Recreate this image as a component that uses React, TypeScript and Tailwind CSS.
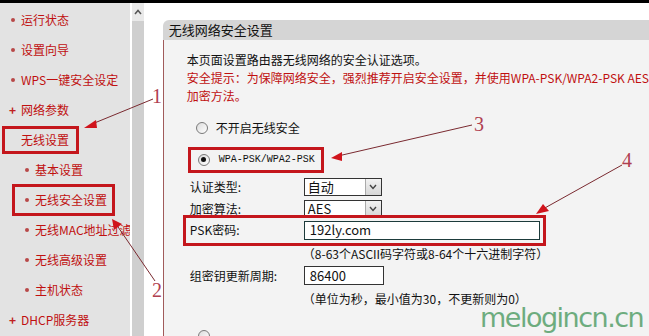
import React from 'react';

const cjk = { fontFamily: '"Noto Sans CJK SC", "Liberation Sans", sans-serif' };

type NavItem = { label: string; kind: 'dot' | 'plus' | 'none'; sub?: boolean; boxed?: boolean };

const navItems: NavItem[] = [
  { label: '运行状态', kind: 'dot' },
  { label: '设置向导', kind: 'dot' },
  { label: 'WPS一键安全设定', kind: 'dot' },
  { label: '网络参数', kind: 'plus' },
  { label: '无线设置', kind: 'none', boxed: true },
  { label: '基本设置', kind: 'dot', sub: true },
  { label: '无线安全设置', kind: 'dot', sub: true, boxed: true },
  { label: '无线MAC地址过滤', kind: 'dot', sub: true },
  { label: '无线高级设置', kind: 'dot', sub: true },
  { label: '主机状态', kind: 'dot', sub: true },
  { label: 'DHCP服务器', kind: 'plus' },
];

function NavRow({ item }: { item: NavItem }) {
  const marker =
    item.kind === 'dot' ? (
      <span className="flex w-[9px] justify-center">
        <span className="h-[4px] w-[4px] rounded-full bg-[#b84848]" />
      </span>
    ) : item.kind === 'plus' ? (
      <span className="w-[9px] text-center text-[12px] font-bold leading-none text-[#c02020]">+</span>
    ) : (
      <span className="w-[9px]" />
    );
  return (
    <div className={`flex h-[30px] items-center whitespace-nowrap ${item.sub ? 'pl-[22px]' : 'pl-[8px]'}`}>
      <div
        className={`flex items-center ${
          item.boxed
            ? item.sub
              ? '-ml-[10px] h-[32px] w-[103px] border-[3px] border-[#c4161c] pl-[7px]'
              : '-ml-[6px] h-[28px] w-[77px] border-[3px] border-[#c4161c] pl-[3px]'
            : ''
        }`}
      >
        {marker}
        <span className="ml-[4px] text-[12px] text-[#c01010]">{item.label}</span>
      </div>
    </div>
  );
}

function Radio({ checked }: { checked?: boolean }) {
  return (
    <span className="flex h-[12px] w-[12px] items-center justify-center rounded-full border border-[#7a7a7a] bg-gradient-to-br from-[#dcdcdc] to-white">
      {checked && <span className="h-[5px] w-[5px] rounded-full bg-[#111]" />}
    </span>
  );
}

function Select({ value }: { value: string }) {
  return (
    <div className="flex h-[18px] w-[78px] items-center border border-[#333] bg-white">
      <span className="flex-1 pl-[3px] text-[13px] leading-none text-[#111]">{value}</span>
      <span className="flex h-full w-[16px] items-center justify-center border-l border-[#aaa] bg-gradient-to-b from-[#f2f2f2] to-[#d6d6d6]">
        <svg width="8" height="6" viewBox="0 0 8 6">
          <path d="M1 1 L4 4.5 L7 1" fill="none" stroke="#444" strokeWidth="1.4" />
        </svg>
      </span>
    </div>
  );
}

export default function App() {
  return (
    <div className="relative h-[336px] w-[649px] overflow-hidden bg-white" style={cjk}>
      <div className="h-[3px] bg-black" />
      <div className="flex h-[333px]">
        {/* sidebar */}
        <div className="w-[130px] bg-[#e3e3e3] pt-[2px]">
          {navItems.map((it) => (
            <NavRow key={it.label} item={it} />
          ))}
        </div>
        <div className="w-[2px] bg-white" />
        {/* scrollbar */}
        <div className="w-[15px] bg-[#cfcfcf]">
          <div className="flex h-[18px] items-center justify-center bg-[#e9e9e9]">
            <svg width="8" height="6" viewBox="0 0 8 6">
              <path d="M1 5 L4 1.5 L7 5" fill="none" stroke="#555" strokeWidth="1.5" />
            </svg>
          </div>
        </div>
        <div className="w-[23px] bg-white" />
        {/* main panel */}
        <div className="flex flex-1 flex-col pt-[17px]">
          <div className="flex h-[23px] items-center rounded-tl-[6px] bg-[#d5d5d5] pl-[6px] text-[13px] text-[#111]">
            无线网络安全设置
          </div>
          <div className="flex-1 border-l border-[#a05a5a] bg-[#f3f3f3] pl-[23px]">
            <div className="mt-[11px] text-[12px] leading-[18px]">
              <div className="text-[#111]">本页面设置路由器无线网络的安全认证选项。</div>
              <div className="whitespace-nowrap text-[#c01010]">
                安全提示：为保障网络安全，强烈推荐开启安全设置，并使用WPA-PSK/WPA2-PSK AES
              </div>
              <div className="text-[#c01010]">加密方法。</div>
            </div>

            <div className="mt-[12px] flex h-[22px] items-center pl-[9px]">
              <Radio />
              <span className="ml-[8px] text-[12px] text-[#111]">不开启无线安全</span>
            </div>

            <div className="ml-[1px] mt-[8px] flex h-[26px] w-[136px] items-center whitespace-nowrap border-[3px] border-[#c4161c] pl-[7px]">
              <Radio checked />
              <span className="ml-[9px] text-[10px] text-[#111]" style={{ fontFamily: '"Liberation Mono", monospace' }}>
                WPA-PSK/WPA2-PSK
              </span>
            </div>

            <div className="mt-[3px] flex h-[22px] items-center pl-[3px]">
              <span className="w-[114px] text-[12px] text-[#111]">认证类型:</span>
              <Select value="自动" />
            </div>
            <div className="flex h-[22px] items-center pl-[3px]">
              <span className="w-[114px] text-[12px] text-[#111]">加密算法:</span>
              <Select value="AES" />
            </div>

            <div className="relative -ml-[4px] -mt-[5px] flex h-[31px] w-[363px] items-center border-[3px] border-[#c4161c] bg-[#f3f3f3] pl-[4px]">
              <span className="w-[114px] text-[12px] text-[#111]">PSK密码:</span>
              <div className="flex h-[19px] w-[236px] items-center border border-[#1d3b3b] bg-white pl-[5px] text-[13px] text-[#111]">
                192ly.com
              </div>
            </div>

            <div className="flex h-[16px] items-center whitespace-nowrap pl-[116px] text-[12px] text-[#111]">
              （8-63个ASCII码字符或8-64个十六进制字符）
            </div>

            <div className="mt-[3px] flex h-[22px] items-center pl-[3px]">
              <span className="w-[114px] text-[12px] text-[#111]">组密钥更新周期:</span>
              <div className="flex h-[19px] w-[80px] items-center border border-[#333] bg-white pl-[5px] text-[13px] text-[#111]">
                86400
              </div>
            </div>

            <div className="mt-[3px] flex h-[18px] items-center whitespace-nowrap pl-[116px] text-[12px] text-[#111]">
              （单位为秒，最小值为30，不更新则为0）
            </div>

            <div className="mt-[22px] pl-[11px]">
              <Radio />
            </div>
          </div>
        </div>
      </div>

      {/* annotations */}
      <svg className="pointer-events-none absolute inset-0" width="649" height="336">
        <g stroke="#7a2a30" strokeWidth="1">
          <line x1="153" y1="99" x2="92" y2="124" />
          <line x1="155" y1="281" x2="116" y2="224" />
          <line x1="472" y1="125" x2="338" y2="156" />
          <line x1="622" y1="165" x2="543" y2="209" />
        </g>
        <g fill="#d0141c">
          <polygon points="84,128 96,120 97,128" />
          <polygon points="112,219 122,224 114,230" />
          <polygon points="331,158 342,152 342,161" />
          <polygon points="536,214 543,204 549,211" />
        </g>
      </svg>
      <span className="absolute left-[152px] top-[86px] text-[20px] leading-none text-[#b04050]" style={{ fontFamily: '"Liberation Serif", serif' }}>1</span>
      <span className="absolute left-[152px] top-[280px] text-[20px] leading-none text-[#b04050]" style={{ fontFamily: '"Liberation Serif", serif' }}>2</span>
      <span className="absolute left-[474px] top-[114px] text-[20px] leading-none text-[#b04050]" style={{ fontFamily: '"Liberation Serif", serif' }}>3</span>
      <span className="absolute left-[622px] top-[150px] text-[20px] leading-none text-[#b04050]" style={{ fontFamily: '"Liberation Serif", serif' }}>4</span>

      {/* watermark */}
      <span
        className="absolute left-[480px] top-[304px] whitespace-nowrap text-[27px] leading-none tracking-[-1.5px] text-[#5fa572] opacity-90"
        style={{ fontFamily: '"DejaVu Sans", sans-serif' }}
      >
        melogincn.cn
      </span>
    </div>
  );
}
